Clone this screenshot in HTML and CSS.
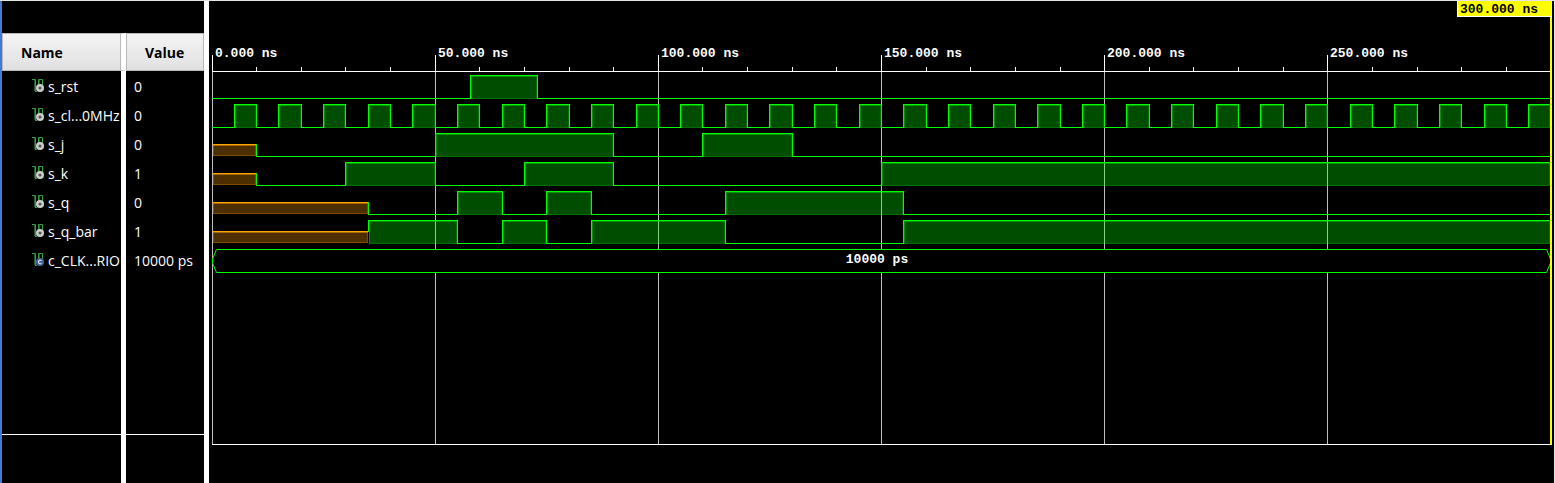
FILE: index.html
```html
<!DOCTYPE html>
<html lang="en">
<head>
<meta charset="utf-8">
<title>Waveform viewer</title>
<link rel="stylesheet" href="styles.css">
</head>
<body>
<svg class="defs" aria-hidden="true">
  <symbol id="probe" viewBox="0 0 13 14">
    <path d="M0 .5H3.5V13M6.5 8V.5H10.5V8M3.5 12.5H5" fill="none" stroke="#2f9e44" stroke-width="1"/>
    <path d="M7.5 1V6M2.5 1V12" fill="none" stroke="#1b5c28" stroke-width="1"/>
  </symbol>
  <symbol id="signal" viewBox="0 0 13 14">
    <use href="#probe" width="13" height="14"/>
    <circle cx="8" cy="9" r="4" fill="#cdcdcd"/>
    <circle cx="8" cy="9" r="1.6" fill="#555"/>
  </symbol>
  <symbol id="constant" viewBox="0 0 13 14">
    <use href="#probe" width="13" height="14"/>
    <circle cx="8" cy="9" r="4" fill="#46639c"/>
    <path d="M9.5 7.7C8.4 6.7 6.5 7.3 6.5 9S8.4 11.3 9.5 10.3" fill="none" stroke="#e6ecf8" stroke-width="1.1"/>
  </symbol>
</svg>
<main class="viewer">
  <section class="signals" aria-label="Signals">
    <table class="signal-table">
      <thead><tr><th class="name-head" scope="col">Name</th><th class="value-head" scope="col">Value</th></tr></thead>
      <tbody id="rows"></tbody>
    </table>
  </section>
  <section class="waves" aria-label="Waveforms"><svg id="plot" class="plot"></svg></section>
</main>
<script src="script.js"></script>
</body>
</html>
```
FILE: styles.css
```css
* { box-sizing: border-box; }
body { margin: 0; background: #000; color: #fff; font-family: "Open Sans", "Noto Sans", sans-serif; }
.defs { position: absolute; width: 0; height: 0; }
.viewer { display: flex; height: 100vh; min-height: 360px; overflow: hidden; border-top: 1px solid #e4e6e6; }
.signals { flex: none; width: 209px; padding-top: 32px; border-left: 2px solid #4479cf; border-right: 5px solid #fff; }
.signal-table { width: 100%; height: 100%; table-layout: fixed; border-collapse: separate; border-spacing: 0; font-size: 14px; line-height: 20px; }
.name-head { width: 124px; }
th { height: 38px; padding: 2px 0 0; font-weight: 700; color: #000; background: linear-gradient(#f4f4f4, #e0e0e2); border: 1px solid #b9b9b9; text-align: left; }
.name-head { padding-left: 18px; border-right: 5px solid #fff; box-shadow: inset -1px 0 #b9b9b9; }
.value-head { padding-left: 18px; }
td { height: 29px; padding: 2px 0 0 8px; white-space: nowrap; overflow: hidden; }
td:first-child { border-right: 5px solid #fff; padding-left: 30px; }
.name { display: flex; align-items: flex-start; gap: 3px; }
.icon { flex: none; width: 13px; height: 14px; margin-top: 2px; }
.filler td { height: auto; box-shadow: inset 0 -1px #fff; }
.footer td { height: 48px; }
.waves { flex: 1; min-width: 0; border-right: 1px solid #e4e6e6; }
.plot { display: block; width: 100%; height: 100%; font-family: "Liberation Mono", monospace; font-size: 13px; font-weight: 700; fill: #fff; }
.white { fill: #fff; }
.grid { fill: #bebebe; }
.line { fill: #00ff00; }
.high { fill: rgba(0, 255, 0, 0.3); }
.edge-light { fill: rgba(0, 255, 0, 0.4); }
.edge-dark { fill: rgba(0, 255, 0, 0.2); }
.unknown { fill: #4d2e00; }
.unknown-line { fill: #ffa500; }
.unknown-light { fill: #a86800; }
.unknown-dark { fill: #804d00; }
.bus { fill: #000; stroke: #00ff00; }
.cursor { fill: #ffff00; }
.cursor-text { fill: #000; }
```
FILE: script.js
```js
const END = 300;
const clock = [];
for (let t = 0; t < END; t += 5) clock.push([t, t % 10 ? 1 : 0]);

// Each wave lists [start time in ns, level]; "X" is an uninitialised level.
const signals = [
  { name: "s_rst", value: "0", wave: [[0, 0], [58, 1], [73, 0]] },
  { name: "s_cl...0MHz", value: "0", wave: clock },
  { name: "s_j", value: "0", wave: [[0, "X"], [10, 0], [50, 1], [90, 0], [110, 1], [130, 0]] },
  { name: "s_k", value: "1", wave: [[0, "X"], [10, 0], [30, 1], [50, 0], [70, 1], [90, 0], [150, 1]] },
  { name: "s_q", value: "0", wave: [[0, "X"], [35, 0], [55, 1], [65, 0], [75, 1], [85, 0], [115, 1], [155, 0]] },
  { name: "s_q_bar", value: "1", wave: [[0, "X"], [35, 1], [55, 0], [65, 1], [75, 0], [85, 1], [115, 0], [155, 1]] },
  { name: "c_CLK...RIOD", value: "10000 ps", bus: true }
];

document.getElementById("rows").innerHTML = signals.map(s =>
  `<tr><td><div class="name"><svg class="icon" aria-hidden="true"><use href="#${s.bus ? "constant" : "signal"}"/></svg>${s.name}</div></td><td>${s.value}</td></tr>`
).join("") + '<tr class="filler"><td></td><td></td></tr><tr class="footer"><td></td><td></td></tr>';

const plot = document.getElementById("plot");

function draw() {
  const { width, height } = plot.getBoundingClientRect();
  const left = 3, ruler = 70, right = Math.round(width) - 4, bottom = Math.round(height) - 39;
  const x = t => t === END ? right : Math.floor(left + (right - left + 1) * t / END);
  const out = [];
  const rect = (cls, x0, y0, w, h) => out.push(`<rect class="${cls}" x="${x0}" y="${y0}" width="${w}" height="${h}"/>`);
  const text = (cls, x0, y0, s, anchor = "start") => out.push(`<text class="${cls}" x="${x0}" y="${y0}" text-anchor="${anchor}">${s}</text>`);

  for (let t = 0; t < END; t += 10) {
    if (t % 50) {
      rect("white", x(t), ruler - 4, 1, 4);
    } else {
      rect("grid", x(t), ruler, 1, bottom - ruler);
      rect("white", x(t), ruler - 16, 1, 16);
      text("white", x(t) + 3, ruler - 14, t + ".000 ns");
    }
  }
  rect("white", left, ruler, right - left, 1);
  rect("white", left, bottom, right - left, 1);

  signals.forEach((s, row) => {
    const top = 74 + row * 29, base = top + 23;
    if (s.bus) {
      const a = left + .5, b = right + .5, y0 = top + .5, y1 = base + .5, mid = (y0 + y1) / 2;
      out.push(`<path class="bus" d="M${a} ${mid}V${mid - 2}L${a + 4} ${y0}H${b - 4}L${b} ${mid - 2}V${mid + 2}L${b - 4} ${y1}H${a + 4}L${a} ${mid + 2}Z"/>`);
      text("white", (left + right) / 2 - 4, top + 14, s.value, "middle");
      return;
    }
    s.wave.forEach(([t, level], i) => {
      const x0 = x(t), x1 = x(i + 1 < s.wave.length ? s.wave[i + 1][0] : END), w = x1 - x0;
      if (level === "X") {
        rect("unknown", x0 + 1, top + 11, w - 1, 12);
        rect("unknown-dark", x0 + 1, base - 1, w - 1, 1);
        rect("unknown-dark", x0 + 1, top + 12, 1, 10);
        rect("unknown-dark", x1 - 1, top + 12, 1, 10);
        rect("unknown-light", x0 + 1, top + 12, w - 1, 1);
        rect("unknown-line", x0, top + 11, w, 1);
      } else if (level) {
        rect("high", x0 + 1, top + 1, w - 1, 23);
        rect("edge-light", x0 + 1, top + 1, w - 1, 1);
        rect("edge-light", x0 + 1, top + 2, 1, 21);
        rect("edge-dark", x1 - 1, top + 2, 1, 21);
        rect("edge-dark", x0 + 1, base, w - 1, 1);
        rect("line", x0, top, w + 1, 1);
      } else {
        rect("line", x0, base, w + 1, 1);
      }
      if (i) {
        const afterX = s.wave[i - 1][1] === "X";
        rect("line", x0, afterX ? top + (level ? 0 : 11) : top, 1, afterX && !level ? 13 : afterX ? 12 : 24);
      }
    });
  });

  rect("cursor", right, 0, 2, bottom + 1);
  rect("white", right - 93, 0, 95, 16);
  rect("cursor", right - 92, 0, 93, 15);
  text("cursor-text", right - 90, 12, END + ".000 ns");
  plot.innerHTML = out.join("");
}

draw();
addEventListener("resize", draw);
```
